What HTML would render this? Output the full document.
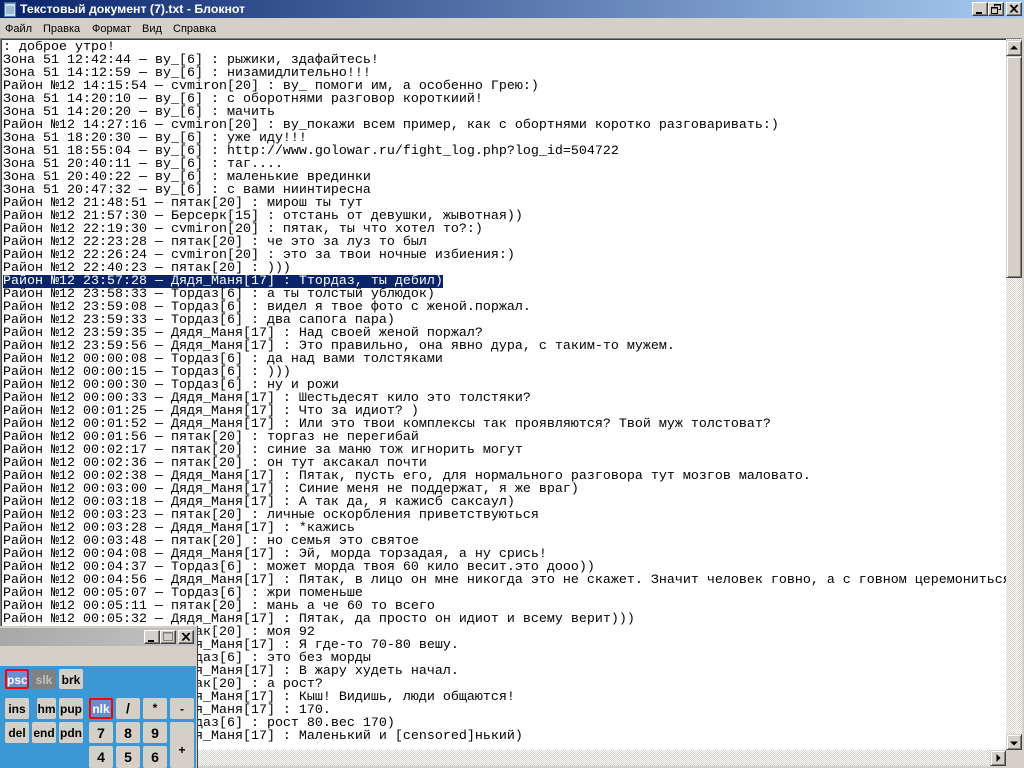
<!DOCTYPE html>
<html lang="ru"><head><meta charset="utf-8"><title>Блокнот</title>
<style>
html,body{margin:0;padding:0;width:1024px;height:768px;overflow:hidden;background:#D4D0C8}
*{box-sizing:border-box}
.a{position:absolute}
#title{left:0;top:0;width:1024px;height:18px;background:linear-gradient(90deg,#0A246A,#A6CAF0)}
#title span{position:absolute;left:20px;top:2px;font:bold 12.3px/14px "Liberation Sans",sans-serif;color:#fff;white-space:pre}
.wb{background:#D4D0C8;border:1px solid;border-color:#fff #404040 #404040 #fff;box-shadow:inset -1px -1px 0 #808080}
#menu{left:0;top:18px;width:1024px;height:20px;background:#D4D0C8;font:11px/20px "Liberation Sans",sans-serif;color:#000}
#menu span{position:absolute;top:1px}
#edit{left:0;top:38px;width:1022px;height:712px;background:#fff;border-top:1px solid #808080;border-left:1px solid #808080;box-shadow:inset 0 1px 0 #404040,inset 1px 0 0 #404040;overflow:hidden}
#txt{position:absolute;left:2px;top:2px;width:1003px;overflow:hidden;font:13.33px/13px "Liberation Mono",monospace;color:#000;white-space:pre;height:709px}
.sel{background:#0A246A;color:#fff;display:inline-block;height:13px}
.chk{background-color:#fff;background-image:conic-gradient(#D4D0C8 25%,#fff 0 50%,#D4D0C8 0 75%,#fff 0);background-size:2px 2px}
.sb{background:#D4D0C8;border:1px solid;border-color:#D4D0C8 #404040 #404040 #D4D0C8;box-shadow:inset 1px 1px 0 #fff,inset -1px -1px 0 #808080}
#calc{left:0;top:626px;width:198px;height:142px;background:#D4D0C8;border-right:1px solid #404040}
#ct{left:0;top:628px;width:196px;height:18px;background:linear-gradient(90deg,#A8A8A8,#C4C4C4)}
#cb{left:0;top:666px;width:196px;height:102px;background:#3C98D4;overflow:hidden}
.k{position:absolute;background:#D4D0C8;border-radius:2px;color:#000;font:bold 12px/22px "Liberation Sans",sans-serif;text-align:center;width:24px;height:21px;white-space:pre;overflow:hidden}
.k.big{font-size:14px}
.on{background:#6A8CD4;color:#fff;border:2px solid #F00;line-height:18px}
</style></head><body>
<div id="title" class="a">
<svg class="a" style="left:3px;top:1px" width="14" height="16" viewBox="0 0 14 16"><rect x="1.5" y="1.5" width="11" height="14" fill="#C8E0F4" stroke="#5078A0"/><path d="M3 1v2M5 1v2M7 1v2M9 1v2M11 1v2" stroke="#30507C"/><path d="M3 6h8M3 8h8M3 10h8M3 12h8" stroke="#7090B0"/></svg>
<span>Текстовый документ (7).txt - Блокнот</span></div>
<div class="a wb" style="left:972px;top:2px;width:16px;height:14px"><svg width="14" height="12" style="display:block"><rect x="3" y="9" width="6" height="2" fill="#000"/></svg></div>
<div class="a wb" style="left:988px;top:2px;width:16px;height:14px"><svg width="14" height="12" style="display:block"><path d="M5.5 3.5V1.5h6v5H9.5M2.5 4.5h6v6h-6zM2.5 5h6M5 2h6" fill="none" stroke="#000"/></svg></div>
<div class="a wb" style="left:1006px;top:2px;width:16px;height:14px"><svg width="14" height="12" style="display:block"><path d="M3 2l7 7.5M4 2l7 7.5M10 2L3 9.5M11 2L4 9.5" stroke="#000"/></svg></div>
<div id="menu" class="a"><span style="left:5px">Файл</span><span style="left:43px">Правка</span><span style="left:92px">Формат</span><span style="left:142px">Вид</span><span style="left:173px">Справка</span></div>
<div id="edit" class="a"><div id="txt">: доброе утро!
Зона 51 12:42:44 — ву_[6] : рыжики, здафайтесь!
Зона 51 14:12:59 — ву_[6] : низамидлительно!!!
Район №12 14:15:54 — cvmiron[20] : ву_ помоги им, а особенно Грею:)
Зона 51 14:20:10 — ву_[6] : с оборотнями разговор короткиий!
Зона 51 14:20:20 — ву_[6] : мачить
Район №12 14:27:16 — cvmiron[20] : ву_покажи всем пример, как с обортнями коротко разговаривать:)
Зона 51 18:20:30 — ву_[6] : уже иду!!!
Зона 51 18:55:04 — ву_[6] : http://www.golowar.ru/fight_log.php?log_id=504722
Зона 51 20:40:11 — ву_[6] : таг....
Зона 51 20:40:22 — ву_[6] : маленькие врединки
Зона 51 20:47:32 — ву_[6] : с вами ниинтиресна
Район №12 21:48:51 — пятак[20] : мирош ты тут
Район №12 21:57:30 — Берсерк[15] : отстань от девушки, жывотная))
Район №12 22:19:30 — cvmiron[20] : пятак, ты что хотел то?:)
Район №12 22:23:28 — пятак[20] : че это за луз то был
Район №12 22:26:24 — cvmiron[20] : это за твои ночные избиения:)
Район №12 22:40:23 — пятак[20] : )))
<span class="sel">Район №12 23:57:28 — Дядя_Маня[17] : Ттордаз, ты дебил)</span>
Район №12 23:58:33 — Тордаз[6] : а ты толстый ублюдок)
Район №12 23:59:08 — Тордаз[6] : видел я твое фото с женой.поржал.
Район №12 23:59:33 — Тордаз[6] : два сапога пара)
Район №12 23:59:35 — Дядя_Маня[17] : Над своей женой поржал?
Район №12 23:59:56 — Дядя_Маня[17] : Это правильно, она явно дура, с таким-то мужем.
Район №12 00:00:08 — Тордаз[6] : да над вами толстяками
Район №12 00:00:15 — Тордаз[6] : )))
Район №12 00:00:30 — Тордаз[6] : ну и рожи
Район №12 00:00:33 — Дядя_Маня[17] : Шестьдесят кило это толстяки?
Район №12 00:01:25 — Дядя_Маня[17] : Что за идиот? )
Район №12 00:01:52 — Дядя_Маня[17] : Или это твои комплексы так проявляются? Твой муж толстоват?
Район №12 00:01:56 — пятак[20] : торгаз не перегибай
Район №12 00:02:17 — пятак[20] : синие за маню тож игнорить могут
Район №12 00:02:36 — пятак[20] : он тут аксакал почти
Район №12 00:02:38 — Дядя_Маня[17] : Пятак, пусть его, для нормального разговора тут мозгов маловато.
Район №12 00:03:00 — Дядя_Маня[17] : Синие меня не поддержат, я же враг)
Район №12 00:03:18 — Дядя_Маня[17] : А так да, я кажисб саксаул)
Район №12 00:03:23 — пятак[20] : личные оскорбления приветствуються
Район №12 00:03:28 — Дядя_Маня[17] : *кажись
Район №12 00:03:48 — пятак[20] : но семья это святое
Район №12 00:04:08 — Дядя_Маня[17] : Эй, морда торзадая, а ну срись!
Район №12 00:04:37 — Тордаз[6] : может морда твоя 60 кило весит.это дооо))
Район №12 00:04:56 — Дядя_Маня[17] : Пятак, в лицо он мне никогда это не скажет. Значит человек говно, а с говном церемониться
Район №12 00:05:07 — Тордаз[6] : жри поменьше
Район №12 00:05:11 — пятак[20] : мань а че 60 то всего
Район №12 00:05:32 — Дядя_Маня[17] : Пятак, да просто он идиот и всему верит)))
Район №12 00:05:40 — пятак[20] : моя 92
Район №12 00:05:48 — Дядя_Маня[17] : Я где-то 70-80 вешу.
Район №12 00:05:55 — Тордаз[6] : это без морды
Район №12 00:06:01 — Дядя_Маня[17] : В жару худеть начал.
Район №12 00:06:09 — пятак[20] : а рост?
Район №12 00:06:15 — Дядя_Маня[17] : Кыш! Видишь, люди общаются!
Район №12 00:06:20 — Дядя_Маня[17] : 170.
Район №12 00:06:28 — Тордаз[6] : рост 80.вес 170)
Район №12 00:06:36 — Дядя_Маня[17] : Маленький и [censored]нький)</div></div>

<div class="a chk" style="left:1006px;top:39px;width:16px;height:711px"></div>
<div class="a sb" style="left:1006px;top:40px;width:16px;height:16px"><svg width="14" height="14" style="display:block"><path d="M7 4.5l-4 4h8z" fill="#000"/></svg></div>
<div class="a sb" style="left:1006px;top:56px;width:16px;height:222px"></div>
<div class="a sb" style="left:1006px;top:734px;width:16px;height:16px"><svg width="14" height="14" style="display:block"><path d="M7 10.5l-4-4h8z" fill="#000"/></svg></div>
<div class="a chk" style="left:198px;top:750px;width:792px;height:16px"></div>
<div class="a sb" style="left:990px;top:750px;width:16px;height:16px"><svg width="14" height="14" style="display:block"><path d="M9.5 7l-4-4v8z" fill="#000"/></svg></div>

<div id="calc" class="a"></div>
<div id="ct" class="a"></div>
<div class="a wb" style="left:144px;top:630px;width:16px;height:14px"><svg width="14" height="12" style="display:block"><rect x="3" y="9" width="6" height="2" fill="#000"/></svg></div>
<div class="a wb" style="left:160px;top:630px;width:16px;height:14px"><svg width="14" height="12" style="display:block"><rect x="2.5" y="1.5" width="9" height="8" fill="none" stroke="#808080"/><path d="M2 2h10" stroke="#808080"/></svg></div>
<div class="a wb" style="left:178px;top:630px;width:16px;height:14px"><svg width="14" height="12" style="display:block"><path d="M3 2l7 7.5M4 2l7 7.5M10 2L3 9.5M11 2L4 9.5" stroke="#000"/></svg></div>
<div id="cb" class="a">
<div class="k on" style="left:5px;top:3px;height:20px;line-height:19px">psc</div>
<div class="k" style="left:32px;top:3px;height:20px;background:#808080;color:#C0C0C0">slk</div>
<div class="k" style="left:59px;top:3px;height:20px">brk</div>
<div class="k" style="left:5px;top:32px">ins</div>
<div class="k" style="left:37px;top:32px;width:19px">hm</div>
<div class="k" style="left:59px;top:32px">pup</div>
<div class="k on" style="left:89px;top:32px">nlk</div>
<div class="k big" style="left:116px;top:32px;line-height:21px">/</div>
<div class="k" style="left:143px;top:32px;line-height:20px">*</div>
<div class="k" style="left:170px;top:32px;font-weight:bold">-</div>
<div class="k" style="left:5px;top:56px">del</div>
<div class="k" style="left:32px;top:56px">end</div>
<div class="k" style="left:59px;top:56px">pdn</div>
<div class="k big" style="left:89px;top:56px">7</div>
<div class="k big" style="left:116px;top:56px">8</div>
<div class="k big" style="left:143px;top:56px">9</div>
<div class="k" style="left:170px;top:56px;height:46px;padding-top:17px">+</div>
<div class="k big" style="left:89px;top:80px;height:22px">4</div>
<div class="k big" style="left:116px;top:80px;height:22px">5</div>
<div class="k big" style="left:143px;top:80px;height:22px">6</div>
</div>
</body></html>
